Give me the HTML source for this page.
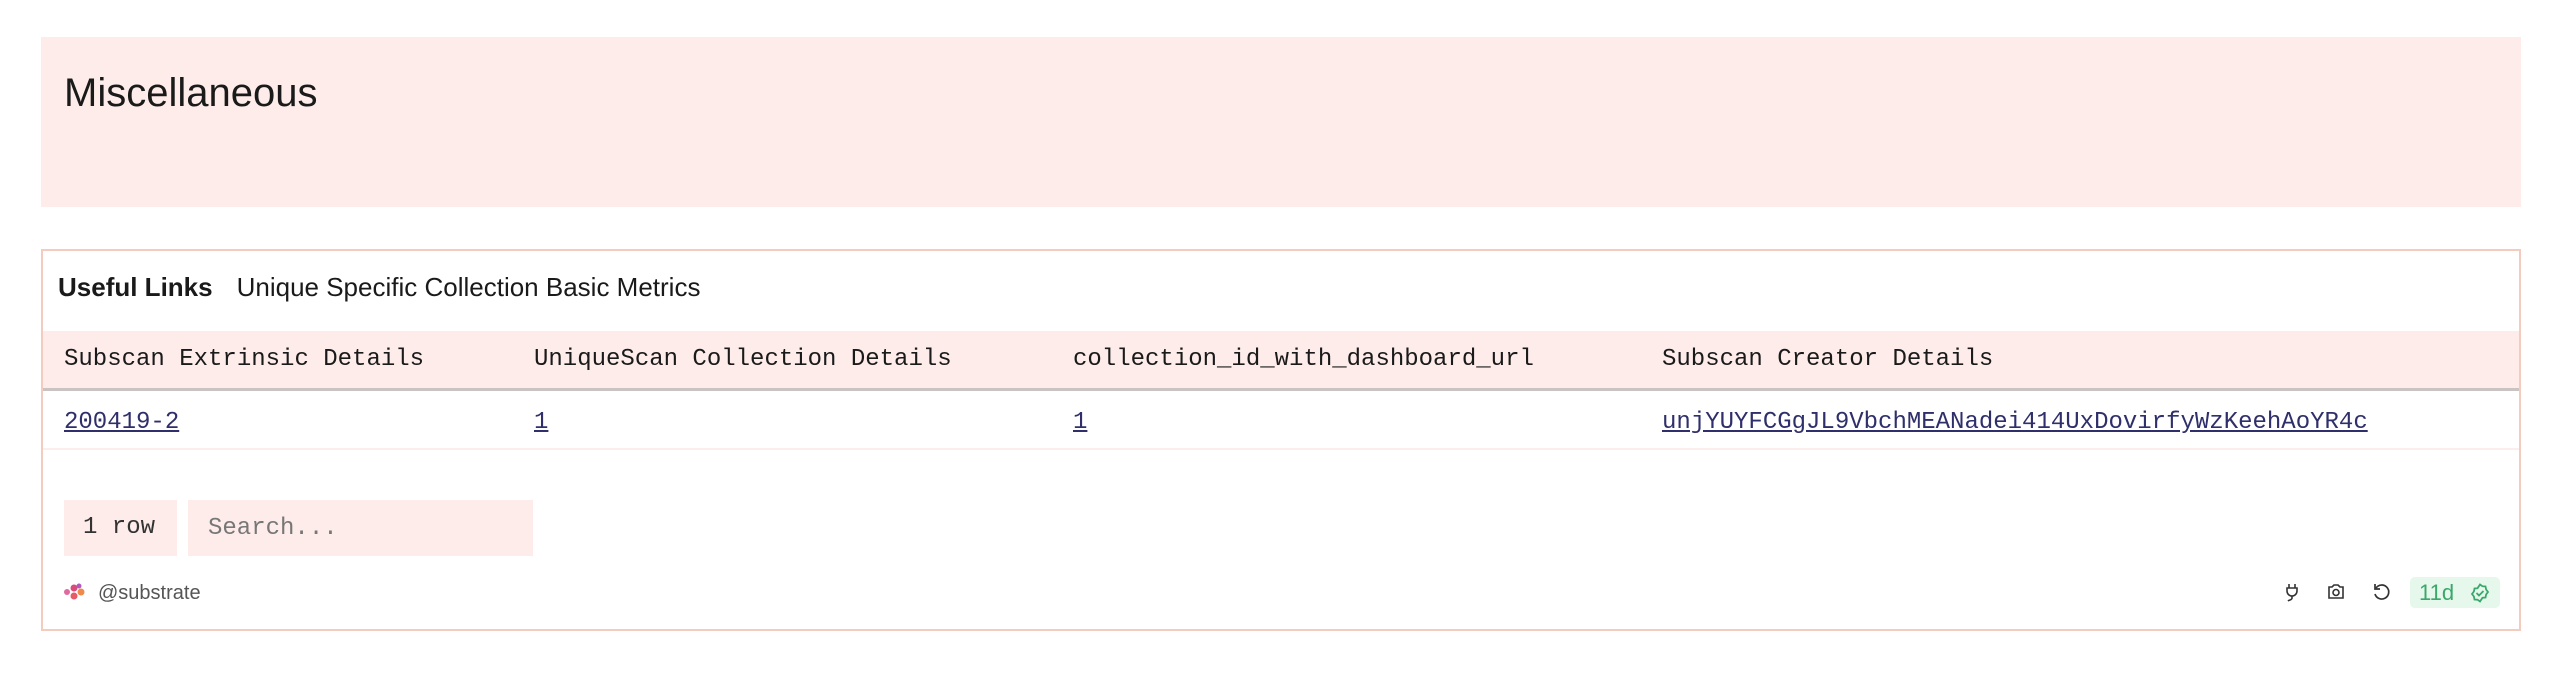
<!DOCTYPE html>
<html><head><meta charset="utf-8"><style>
*{box-sizing:border-box;margin:0;padding:0}
body{width:2562px;height:675px;background:#fff;position:relative;overflow:hidden;font-family:"Liberation Sans",sans-serif;color:#1a1a1a}
.hdr{position:absolute;left:41px;top:37px;width:2480px;height:170px;background:#fdecea}
.hdr h1{position:absolute;left:23px;top:36px;font-size:40px;font-weight:normal;line-height:1}
.card{position:absolute;left:41px;top:249px;width:2480px;height:382px;border:2px solid #f3cbbf;background:#fff}
.t{position:absolute;top:21px;left:15px;font-size:26px;white-space:nowrap}
.t b{font-weight:bold;margin-right:24px}
.th{position:absolute;left:0;top:80px;width:100%;height:60px;background:#fdecea;border-bottom:3px solid #c9c3c2}
.m{font-family:"Liberation Mono",monospace;font-size:24px;position:absolute;white-space:nowrap}
.tr{position:absolute;left:0;top:140px;width:100%;height:59px;border-bottom:2px solid #fbeeec}
a{color:#2f2f6b;text-decoration:underline}
.box{position:absolute;top:249px;height:56px;background:#fdecea}
.ft{position:absolute;left:55px;top:331px;font-size:20px;color:#555}
</style></head><body>
<div class="hdr"><h1>Miscellaneous</h1></div>
<div class="card">
<div class="t"><b>Useful Links</b>Unique Specific Collection Basic Metrics</div>
<div class="th">
<span class="m" style="left:21px;top:15px">Subscan Extrinsic Details</span>
<span class="m" style="left:491px;top:15px">UniqueScan Collection Details</span>
<span class="m" style="left:1030px;top:15px">collection_id_with_dashboard_url</span>
<span class="m" style="left:1619px;top:15px">Subscan Creator Details</span>
</div>
<div class="tr">
<a class="m" style="left:21px;top:18px">200419-2</a>
<a class="m" style="left:491px;top:18px">1</a>
<a class="m" style="left:1030px;top:18px">1</a>
<a class="m" style="left:1619px;top:18px">unjYUYFCGgJL9VbchMEANadei414UxDovirfyWzKeehAoYR4c</a>
</div>
<div class="box" style="left:21px;width:113px"><span class="m" style="left:19px;top:14px;color:#333">1 row</span></div>
<div class="box" style="left:145px;width:345px"><span class="m" style="left:20px;top:15px;color:#777">Search...</span></div>
<svg style="position:absolute;left:20px;top:331px" width="26" height="20" viewBox="0 0 26 20"><circle cx="4" cy="10" r="3" fill="#e06aa0"/><circle cx="11" cy="6" r="3.5" fill="#d84b7a"/><circle cx="11" cy="14" r="3.5" fill="#e65a6a"/><circle cx="18" cy="10" r="3.5" fill="#f08a4a"/><circle cx="16" cy="4" r="2.5" fill="#b05ac0"/></svg>
<div class="ft">@substrate</div>
<svg style="position:absolute;left:2241px;top:331px" width="16" height="20" viewBox="0 0 16 20" fill="none" stroke="#333" stroke-width="1.6"><path d="M5 2v4M11 2v4M3 6h10v3a5 5 0 0 1-10 0z M8 14v2c0 2-3 2-4 3"/></svg>
<svg style="position:absolute;left:2284px;top:332px" width="18" height="17" viewBox="0 0 18 17" fill="none" stroke="#333" stroke-width="1.6"><path d="M2 4h3l2-2h4l2 2h3v11H2z"/><circle cx="9" cy="9.5" r="3"/></svg>
<svg style="position:absolute;left:2328px;top:331px" width="20" height="20" viewBox="0 0 20 20" fill="none" stroke="#333" stroke-width="1.7"><path d="M5 6a7 7 0 1 1-1 6"/><path d="M4 2v5h5"/></svg>
<div style="position:absolute;left:2367px;top:326px;width:90px;height:31px;background:#e6f7ec;border-radius:5px;color:#3aa86a;font-size:22px;padding:3px 0 0 9px">11d<svg style="position:absolute;left:60px;top:6px" width="20" height="20" viewBox="0 0 20 20" fill="none" stroke="#3aa86a" stroke-width="1.8"><path d="M10 1.5l2.5 1.8 3 .2.6 3 1.9 2.5-1.9 2.5-.6 3-3 .2L10 18.5l-2.5-1.8-3-.2-.6-3L2 11l1.9-2.5.6-3 3-.2z"/><path d="M6.5 10l2.5 2.5 4.5-4.5"/></svg></div>
</div>
</body></html>
